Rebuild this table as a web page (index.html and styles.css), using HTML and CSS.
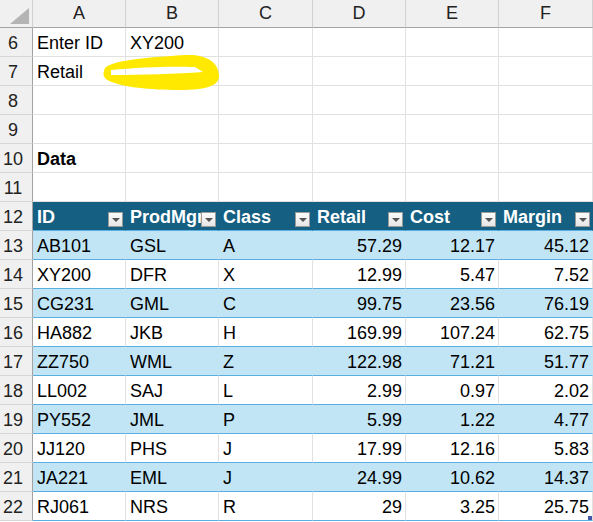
FILE: index.html
```html
<!DOCTYPE html>
<html>
<head>
<meta charset="utf-8">
<link rel="stylesheet" href="styles.css">
</head>
<body>
<div class="sheet">
  <div class="row colhead">
    <div class="corner"><span class="tri"></span></div>
    <div class="ch">A</div><div class="ch">B</div><div class="ch">C</div><div class="ch">D</div><div class="ch">E</div><div class="ch">F</div>
  </div>
  <div class="row"><div class="rh">6</div><div class="c">Enter ID</div><div class="c">XY200</div><div class="c"></div><div class="c"></div><div class="c"></div><div class="c"></div></div>
  <div class="row"><div class="rh">7</div><div class="c">Retail</div><div class="c"></div><div class="c"></div><div class="c"></div><div class="c"></div><div class="c"></div></div>
  <div class="row"><div class="rh">8</div><div class="c"></div><div class="c"></div><div class="c"></div><div class="c"></div><div class="c"></div><div class="c"></div></div>
  <div class="row"><div class="rh">9</div><div class="c"></div><div class="c"></div><div class="c"></div><div class="c"></div><div class="c"></div><div class="c"></div></div>
  <div class="row"><div class="rh">10</div><div class="c b">Data</div><div class="c"></div><div class="c"></div><div class="c"></div><div class="c"></div><div class="c"></div></div>
  <div class="row"><div class="rh">11</div><div class="c"></div><div class="c"></div><div class="c"></div><div class="c"></div><div class="c"></div><div class="c"></div></div>
  <div class="row thead"><div class="rh">12</div>
    <div class="c th">ID<span class="fb"></span></div>
    <div class="c th">ProdMgr<span class="fb"></span></div>
    <div class="c th">Class<span class="fb"></span></div>
    <div class="c th">Retail<span class="fb"></span></div>
    <div class="c th">Cost<span class="fb"></span></div>
    <div class="c th">Margin<span class="fb"></span></div>
  </div>
  <div class="row trow band"><div class="rh">13</div><div class="c">AB101</div><div class="c">GSL</div><div class="c">A</div><div class="c n">57.29</div><div class="c n">12.17</div><div class="c n">45.12</div></div>
  <div class="row trow"><div class="rh">14</div><div class="c">XY200</div><div class="c">DFR</div><div class="c">X</div><div class="c n">12.99</div><div class="c n">5.47</div><div class="c n">7.52</div></div>
  <div class="row trow band"><div class="rh">15</div><div class="c">CG231</div><div class="c">GML</div><div class="c">C</div><div class="c n">99.75</div><div class="c n">23.56</div><div class="c n">76.19</div></div>
  <div class="row trow"><div class="rh">16</div><div class="c">HA882</div><div class="c">JKB</div><div class="c">H</div><div class="c n">169.99</div><div class="c n">107.24</div><div class="c n">62.75</div></div>
  <div class="row trow band"><div class="rh">17</div><div class="c">ZZ750</div><div class="c">WML</div><div class="c">Z</div><div class="c n">122.98</div><div class="c n">71.21</div><div class="c n">51.77</div></div>
  <div class="row trow"><div class="rh">18</div><div class="c">LL002</div><div class="c">SAJ</div><div class="c">L</div><div class="c n">2.99</div><div class="c n">0.97</div><div class="c n">2.02</div></div>
  <div class="row trow band"><div class="rh">19</div><div class="c">PY552</div><div class="c">JML</div><div class="c">P</div><div class="c n">5.99</div><div class="c n">1.22</div><div class="c n">4.77</div></div>
  <div class="row trow"><div class="rh">20</div><div class="c">JJ120</div><div class="c">PHS</div><div class="c">J</div><div class="c n">17.99</div><div class="c n">12.16</div><div class="c n">5.83</div></div>
  <div class="row trow band"><div class="rh">21</div><div class="c">JA221</div><div class="c">EML</div><div class="c">J</div><div class="c n">24.99</div><div class="c n">10.62</div><div class="c n">14.37</div></div>
  <div class="row trow"><div class="rh">22</div><div class="c">RJ061</div><div class="c">NRS</div><div class="c">R</div><div class="c n">29</div><div class="c n">3.25</div><div class="c n">25.75</div></div>

  <svg class="ink" width="593" height="522" viewBox="0 0 593 522">
    <path fill="#ffe900" fill-rule="evenodd" d="M104 71 C104 61 140 58 185 55 C206 54 219 62 219 76 C219 86 206 90 180 90 C150 90 122 87 109 81 C103 78 103 74 104 71 Z M111 70 C140 67 172 66 195 67 L203 72 C176 74 142 75 111 75 Z"/>
  </svg>
  <span class="handle"></span>
</div>
</body>
</html>
```

FILE: styles.css
```css
* { box-sizing: border-box; }
html, body { margin: 0; padding: 0; background: #fff; overflow: hidden; }
body {
  font-family: "Liberation Sans", Arial, sans-serif;
  font-size: 18px;
  color: #000;
}
.sheet { position: relative; width: 593px; height: 522px; }
.row {
  display: grid;
  grid-template-columns: 33px 93px 93px 94px 93px 93px 94px;
  height: 29px;
}
.c {
  border-right: 1px solid #e1e1e1;
  border-bottom: 1px solid #e1e1e1;
  padding: 2px 4px 0 4px;
  line-height: 26px;
  white-space: nowrap;
  overflow: hidden;
}
.b { font-weight: bold; }
.n { text-align: right; padding-right: 3px; }
.rh {
  background: #f0f0f0;
  border-right: 1px solid #a3a3a3;
  border-bottom: 1px solid #d6d6d6;
  text-align: center;
  padding: 2px 6px 0 0;
  line-height: 26px;
  color: #222;
}
.colhead { height: 28px; }
.corner {
  position: relative;
  background: #f0f0f0;
  border-right: 1px solid #d0d0d0;
  border-bottom: 1px solid #a3a3a3;
}
.tri {
  position: absolute;
  right: 3px;
  bottom: 3px;
  width: 0; height: 0;
  border-left: 19px solid transparent;
  border-bottom: 16px solid #b4b4b4;
}
.ch {
  background: #f0f0f0;
  border-right: 1px solid #d0d0d0;
  border-bottom: 1px solid #a3a3a3;
  text-align: center;
  line-height: 27px;
  color: #222;
}
.thead .c.th {
  position: relative;
  background: #156082;
  color: #fff;
  font-weight: bold;
  border-right: 1px solid #156082;
  border-bottom: 1px solid #5aaee0;
  overflow: hidden;
}
.fb {
  position: absolute;
  right: 2px;
  bottom: 3px;
  width: 15px;
  height: 15px;
  border: 1px solid #9a9a9a;
  background: linear-gradient(#fbfbfb, #e6e6e6);
}
.fb::after {
  content: "";
  position: absolute;
  left: 3px;
  top: 5px;
  border-left: 4px solid transparent;
  border-right: 4px solid transparent;
  border-top: 4px solid #555;
}
.trow .c { border-bottom: 1px solid #5aaee0; }
.band .c {
  background: #c1e5f5;
  border-right-color: #c1e5f5;
}
.ink {
  position: absolute;
  left: 0; top: 0;
  pointer-events: none;
}
.handle {
  position: absolute;
  left: 588px;
  top: 516px;
  width: 4px;
  height: 4px;
  background: #4456a8;
}
```
